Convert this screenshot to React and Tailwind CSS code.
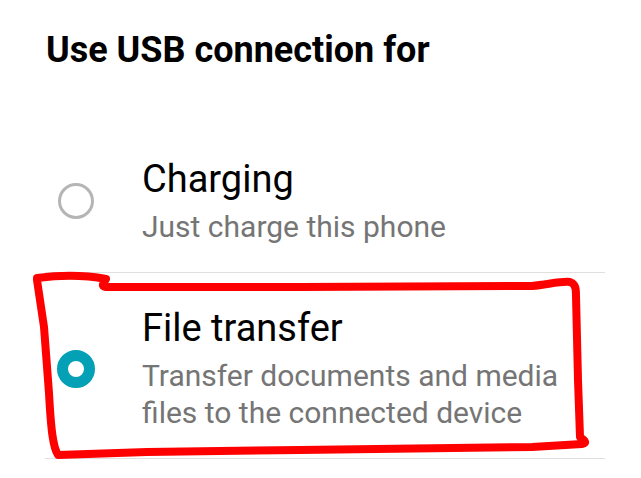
export default function App() {
  return (
    <div className="relative w-[641px] h-[478px] bg-white overflow-hidden" style={{ fontFamily: "Roboto, 'Noto Sans', sans-serif" }}>
      <div className="pt-[29px] pl-[46px]">
        <h1 className="text-[36px] leading-[42px] font-bold text-black">Use USB connection for</h1>
      </div>
      <div className="mt-[53px] ml-[45px] w-[560px]">
        <div className="flex items-center border-b border-[#e0e0e0] pt-[33px] pb-[27px]">
          <div className="w-[97px] pl-[13px] shrink-0">
            <div className="w-[36px] h-[36px] rounded-full border-[3px] border-[#b5b5b5]" />
          </div>
          <div>
            <div className="text-[38px] leading-[44px] text-black">Charging</div>
            <div className="mt-[7px] text-[30px] leading-[37px] text-[#757575]">Just charge this phone</div>
          </div>
        </div>
        <div className="flex items-center border-b border-[#e0e0e0] pt-[33px] pb-[27px]">
          <div className="w-[97px] pl-[12px] shrink-0">
            <div className="w-[38px] h-[38px] rounded-full border-[11px] border-[#03a0b6]" />
          </div>
          <div>
            <div className="text-[38px] leading-[44px] text-black">File transfer</div>
            <div className="mt-[7px] text-[30px] leading-[37px] text-[#757575]">
              Transfer documents and media
              <br />
              files to the connected device
            </div>
          </div>
        </div>
      </div>
      <svg className="absolute inset-0 pointer-events-none" width="641" height="478" viewBox="0 0 641 478">
        <path
          d="M37 278 C60 275 85 275 106 279 C104 283 100 286 106 287 L300 287 L532 286 C550 284 562 281 570 282 C576 284 576 290 576 296 L578 380 L580 437 C584 440 588 443 582 444 L532 447 L300 450 L147 452 L58 455 C53 447 51 430 49 393 L44 327 L37 280 Z"
          fill="none"
          stroke="#ff0000"
          strokeWidth="8"
          strokeLinejoin="round"
          strokeLinecap="round"
        />
      </svg>
    </div>
  );
}
